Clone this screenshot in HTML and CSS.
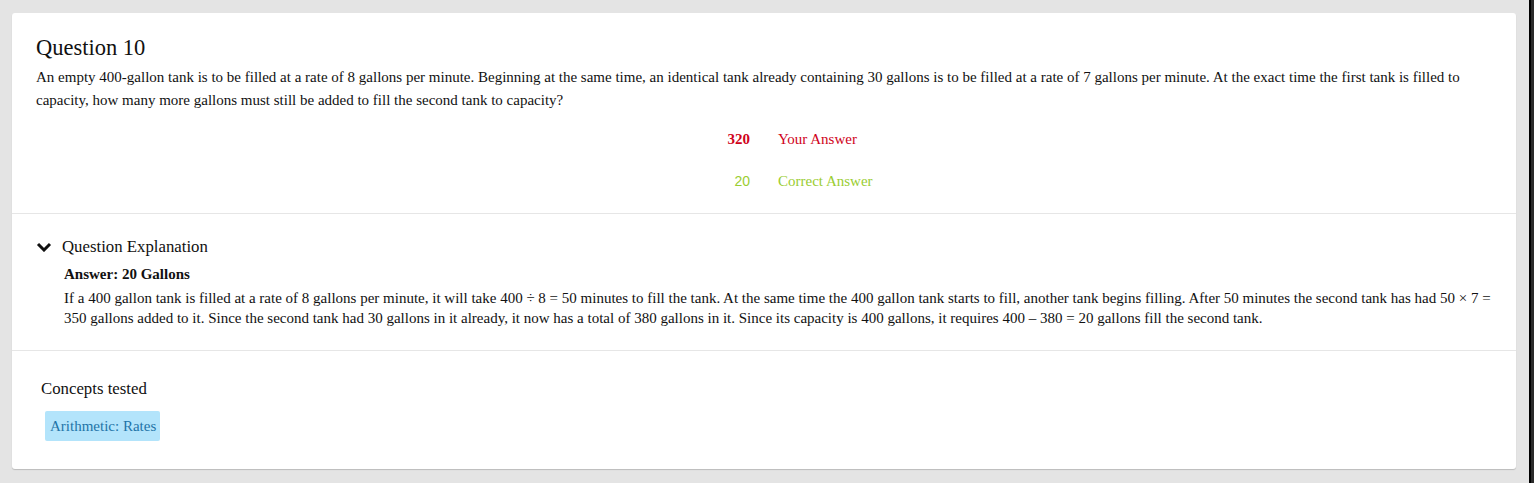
FILE: index.html
```html
<!DOCTYPE html>
<html>
<head>
<meta charset="utf-8">
<link rel="stylesheet" href="styles.css">
</head>
<body>
<div class="page">
  <div class="card">
    <section class="question">
      <h2 class="q-title">Question 10</h2>
      <p class="q-text">An empty 400-gallon tank is to be filled at a rate of 8 gallons per minute. Beginning at the same time, an identical tank already containing 30 gallons is to be filled at a rate of 7 gallons per minute. At the exact time the first tank is filled to capacity, how many more gallons must still be added to fill the second tank to capacity?</p>
      <div class="answers">
        <div class="ans-val wrong">320</div>
        <div class="ans-label wrong-label">Your Answer</div>
        <div class="ans-val right">20</div>
        <div class="ans-label right-label">Correct Answer</div>
      </div>
    </section>
    <section class="explanation">
      <div class="exp-head">
        <svg class="chev" width="16" height="10" viewBox="0 0 16 10"><path d="M2 2 L8 8 L14 2" fill="none" stroke="#111" stroke-width="3" stroke-linecap="butt" stroke-linejoin="miter"/></svg>
        <span>Question Explanation</span>
      </div>
      <div class="exp-body">
        <div class="exp-answer">Answer: 20 Gallons</div>
        <p class="exp-text">If a 400 gallon tank is filled at a rate of 8 gallons per minute, it will take 400 ÷ 8 = 50 minutes to fill the tank. At the same time the 400 gallon tank starts to fill, another tank begins filling. After 50 minutes the second tank has had 50 × 7 = 350 gallons added to it. Since the second tank had 30 gallons in it already, it now has a total of 380 gallons in it. Since its capacity is 400 gallons, it requires 400 – 380 = 20 gallons fill the second tank.</p>
      </div>
    </section>
    <section class="concepts">
      <div class="concepts-title">Concepts tested</div>
      <div class="tags"><span class="tag">Arithmetic: Rates</span></div>
    </section>
  </div>
</div>
<div class="strip"></div>
</body>
</html>
```
FILE: styles.css
```css
html, body {
  margin: 0;
  padding: 0;
  height: 100%;
}
body {
  background: #e4e4e4;
  display: flex;
  font-family: "Liberation Serif", "Times New Roman", serif;
  color: #111;
}
.page {
  flex: 1;
  padding: 13px 13px 0 12px;
}
.strip {
  width: 3px;
  border-left: 2px solid #000;
  background: #2b2b2b;
}
.card {
  background: #fff;
  border-radius: 3px;
  box-shadow: 0 1px 1px rgba(0,0,0,0.18);
}
.question {
  padding: 21px 24px 23px 24px;
  border-bottom: 1px solid #e6e6e6;
}
.q-title {
  margin: 0;
  font-weight: normal;
  font-size: 22.5px;
  line-height: 28px;
  color: #111;
}
.q-text {
  margin: 4px 0 0 0;
  font-size: 15px;
  line-height: 23px;
}
.answers {
  display: grid;
  grid-template-columns: 1fr 1fr;
  column-gap: 28px;
  row-gap: 24px;
  margin-top: 18px;
  font-size: 15px;
  line-height: 18px;
}
.ans-val { text-align: right; }
.wrong { color: #d0021b; font-weight: bold; }
.wrong-label { color: #d0021b; }
.right { color: #9acd32; font-family: "Liberation Sans", Arial, sans-serif; font-size: 14px; }
.right-label { color: #9acd32; }
.explanation {
  padding: 23px 24px 22px 24px;
  border-bottom: 1px solid #e6e6e6;
}
.exp-head {
  display: flex;
  align-items: center;
  gap: 10px;
  font-size: 16.8px;
  line-height: 20px;
}
.chev { display: block; }
.exp-body {
  padding-left: 28px;
  margin-top: 7px;
}
.exp-answer {
  font-weight: bold;
  font-size: 15px;
  line-height: 20px;
}
.exp-text {
  margin: 4px 0 0 0;
  font-size: 15px;
  line-height: 20px;
}
.concepts {
  padding: 28px 24px 28px 29px;
}
.concepts-title {
  font-size: 16.8px;
  line-height: 20px;
}
.tags {
  margin-top: 12px;
  padding-left: 4px;
}
.tag {
  display: inline-block;
  background: #b3e4fb;
  color: #1f74a8;
  font-size: 15px;
  line-height: 18px;
  padding: 6px 4px 6px 5px;
  border-radius: 2px;
}
```
